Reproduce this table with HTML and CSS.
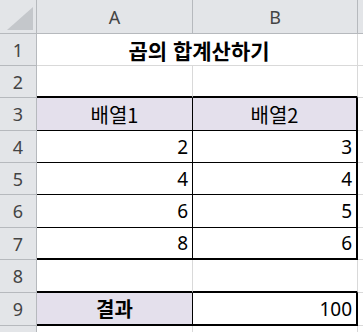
FILE: index.html
```html
<!DOCTYPE html>
<html lang="ko">
<head>
<meta charset="utf-8">
<link rel="stylesheet" href="styles.css">
</head>
<body>
<div class="sheet">
  <div class="hd corner"><svg class="tri" width="37" height="34" viewBox="0 0 37 34"><polygon points="33,7 33,30 7,30" fill="#c4c7cb"/></svg></div>
  <div class="hd col">A</div>
  <div class="hd col">B</div>
  <div class="hd col edge"></div>

  <div class="hd row">1</div>
  <div class="cell title span2">곱의 합계산하기</div>
  <div class="cell edge"></div>

  <div class="hd row">2</div>
  <div class="cell tb"></div>
  <div class="cell tb"></div>
  <div class="cell edge"></div>

  <div class="hd row">3</div>
  <div class="cell lav ca thin">배열1</div>
  <div class="cell lav ca thinb">배열2</div>
  <div class="cell edge"></div>

  <div class="hd row">4</div>
  <div class="cell num thin">2</div>
  <div class="cell num thinb">3</div>
  <div class="cell edge"></div>

  <div class="hd row">5</div>
  <div class="cell num thin">4</div>
  <div class="cell num thinb">4</div>
  <div class="cell edge"></div>

  <div class="hd row">6</div>
  <div class="cell num thin">6</div>
  <div class="cell num thinb">5</div>
  <div class="cell edge"></div>

  <div class="hd row">7</div>
  <div class="cell num thin tb">8</div>
  <div class="cell num thinb tb">6</div>
  <div class="cell edge"></div>

  <div class="hd row">8</div>
  <div class="cell tb"></div>
  <div class="cell tb"></div>
  <div class="cell edge"></div>

  <div class="hd row">9</div>
  <div class="cell lav ca bold thin tb">결과</div>
  <div class="cell num thinb tb">100</div>
  <div class="cell edge"></div>

  <div class="hd row"></div>
  <div class="cell"></div>
  <div class="cell"></div>
  <div class="cell edge"></div>
</div>
</body>
</html>
```

FILE: styles.css
```css
html, body {
  margin: 0;
  padding: 0;
  background: #ffffff;
}
.sheet {
  display: grid;
  grid-template-columns: 37px 156px 165px 5px;
  grid-template-rows: 34px 32px 32px 33px 32px 32px 33px 32px 33px 33px 20px;
  width: 363px;
  height: 332px;
  overflow: hidden;
  font-family: "Noto Sans", "Noto Sans CJK KR", sans-serif;
  font-size: 17px;
  color: #000;
}
.sheet > div {
  box-sizing: border-box;
  display: flex;
  align-items: center;
  min-width: 0;
  white-space: nowrap;
}
.hd {
  background: #e3e5e8;
  color: #444;
  border-right: 1px solid #b6b9bd;
  border-bottom: 1px solid #b6b9bd;
  justify-content: center;
  font-size: 18px;
}
.corner {
  position: relative;
}
.tri {
  position: absolute;
  left: 0;
  top: 0;
}
.cell {
  border-right: 1px solid #d9d9d9;
  border-bottom: 1px solid #d9d9d9;
  background: #fff;
}
.span2 {
  grid-column: span 2;
}
.title {
  justify-content: center;
  font-weight: bold;
  font-family: "Noto Sans CJK KR", sans-serif;
  font-size: 21px;
  padding-top: 1px;
  padding-left: 4px;
}
.lav {
  background: #e4e0ec;
}
.ca {
  justify-content: center;
  font-family: "Noto Sans CJK KR", sans-serif;
  font-size: 20px;
}
.bold {
  font-weight: bold;
}
.num {
  justify-content: flex-end;
  padding-right: 4px;
  font-size: 19px;
}
.thin {
  border-right: 1px solid #000;
  border-bottom: 1px solid #000;
}
.thinb {
  border-right: 2px solid #000;
  border-bottom: 1px solid #000;
}
.tb {
  border-bottom: 2px solid #000;
}
.edge {
  border-right: none;
}
```
